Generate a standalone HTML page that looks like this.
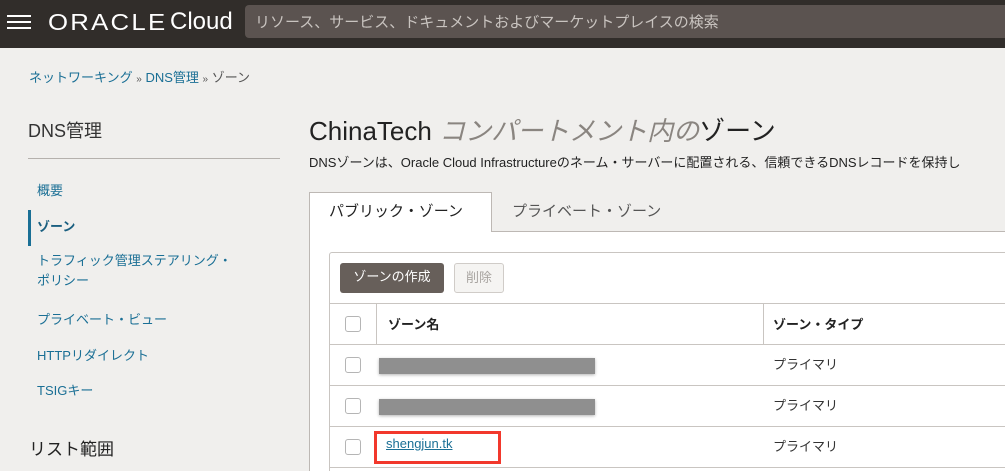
<!DOCTYPE html>
<html style="overflow:hidden"><head><meta charset="utf-8"><style>
*{margin:0;padding:0;box-sizing:border-box}
html,body{width:1005px;height:471px;overflow:hidden}
body{background:#f0efed;font-family:"Liberation Sans","Noto Sans CJK JP",sans-serif;position:relative;color:#222}
.a{position:absolute;white-space:nowrap}
.top{position:absolute;left:0;top:0;width:1005px;height:48px;background:#312d2a}
.lnk{color:#1a6f95}
.cb{position:absolute;left:345px;width:16px;height:16px;border:1px solid #b5b5b5;border-radius:3px;background:#fff}
.hl{position:absolute;left:330px;right:0;height:1px;background:#c9c5c1}
.blur{position:absolute;left:379px;width:216px;height:16px;background:#8f8f8f;box-shadow:0 1px 3px rgba(0,0,0,.3)}
.ty{left:773px;font-size:13px;color:#333}
</style></head><body>
<div class="top"></div>
<div class="a" style="left:7px;top:15px;width:24px;height:2px;background:#fff;box-shadow:0 6px 0 #fff,0 12px 0 #fff"></div>
<div class="a" style="left:48px;top:9px;font-size:23px;color:#fff;letter-spacing:2px;transform:scaleX(1.12);transform-origin:left">ORACLE</div>
<div class="a" style="left:170px;top:8px;font-size:24px;color:#fff">Cloud</div>
<div class="a" style="left:245px;top:5px;width:770px;height:33px;background:#5b5350;border-radius:4px"></div>
<div class="a" style="left:255px;top:11px;font-size:15px;color:#c9c4c0">リソース、サービス、ドキュメントおよびマーケットプレイスの検索</div>
<div class="a" style="left:29px;top:67px;font-size:13px"><span class="lnk">ネットワーキング</span> <span style="font-size:10px;color:#555">»</span> <span class="lnk">DNS管理</span> <span style="font-size:10px;color:#555">»</span> <span style="color:#555">ゾーン</span></div>
<div class="a" style="left:28px;top:117px;font-size:18px;color:#333">DNS管理</div>
<div class="a" style="left:28px;top:158px;width:252px;height:1px;background:#b5b1ad"></div>
<div class="a lnk" style="left:37px;top:180px;font-size:13px">概要</div>
<div class="a" style="left:28px;top:210px;width:3px;height:36px;background:#1a6f95"></div>
<div class="a" style="left:37px;top:216px;font-size:13px;font-weight:bold;color:#1a5f80">ゾーン</div>
<div class="a lnk" style="left:37px;top:251px;font-size:13px;line-height:20px">トラフィック管理ステアリング・<br>ポリシー</div>
<div class="a lnk" style="left:37px;top:309px;font-size:13px">プライベート・ビュー</div>
<div class="a lnk" style="left:37px;top:345px;font-size:13px">HTTPリダイレクト</div>
<div class="a lnk" style="left:37px;top:380px;font-size:13px">TSIGキー</div>
<div class="a" style="left:29px;top:435px;font-size:17px;color:#222">リスト範囲</div>
<div class="a" style="left:309px;top:111px;font-size:26px;color:#222">ChinaTech <span style="color:#8a8580;font-style:italic">コンパートメント内の</span>ゾーン</div>
<div class="a" style="left:309px;top:152px;font-size:13px;color:#222">DNSゾーンは、Oracle Cloud Infrastructureのネーム・サーバーに配置される、信頼できるDNSレコードを保持し</div>
<div class="a" style="left:309px;top:231px;width:700px;height:240px;background:#fff;border-left:1px solid #bdb8b4;border-top:1px solid #bdb8b4"></div>
<div class="a" style="left:309px;top:192px;width:183px;height:40px;background:#fff;border:1px solid #bdb8b4;border-bottom:none"></div>
<div class="a" style="left:329px;top:200px;font-size:15px;color:#222">パブリック・ゾーン</div>
<div class="a" style="left:512px;top:200px;font-size:15px;color:#555">プライベート・ゾーン</div>
<div class="a" style="left:329px;top:252px;width:690px;height:225px;border:1px solid #c9c5c1;border-radius:3px"></div>
<div class="a" style="left:340px;top:263px;width:104px;height:30px;background:#675f5a;border-radius:3px;color:#fff;font-size:13px;line-height:28px;text-align:center">ゾーンの作成</div>
<div class="a" style="left:454px;top:263px;width:50px;height:30px;background:#f5f4f2;border:1px solid #d0ccc8;border-radius:3px;color:#a9a5a1;font-size:13px;line-height:27px;text-align:center">削除</div>
<div class="hl" style="top:303px"></div>
<div class="hl" style="top:344px"></div>
<div class="hl" style="top:385px"></div>
<div class="hl" style="top:426px"></div>
<div class="hl" style="top:467px"></div>
<div class="a" style="left:376px;top:303px;width:1px;height:41px;background:#c9c5c1"></div>
<div class="a" style="left:763px;top:303px;width:1px;height:41px;background:#c9c5c1"></div>
<div class="cb" style="top:316px"></div>
<div class="cb" style="top:357px"></div>
<div class="cb" style="top:398px"></div>
<div class="cb" style="top:439px"></div>
<div class="a" style="left:388px;top:314px;font-size:13px;font-weight:bold">ゾーン名</div>
<div class="a" style="left:773px;top:314px;font-size:13px;font-weight:bold">ゾーン・タイプ</div>
<div class="blur" style="top:358px"></div>
<div class="blur" style="top:399px"></div>
<div class="a ty" style="top:354px">プライマリ</div>
<div class="a ty" style="top:395px">プライマリ</div>
<div class="a ty" style="top:436px">プライマリ</div>
<div class="a" style="left:374px;top:431px;width:127px;height:33px;border:3px solid #f2382c"></div>
<div class="a lnk" style="left:386px;top:436px;font-size:13px;text-decoration:underline">shengjun.tk</div>
</body></html>
